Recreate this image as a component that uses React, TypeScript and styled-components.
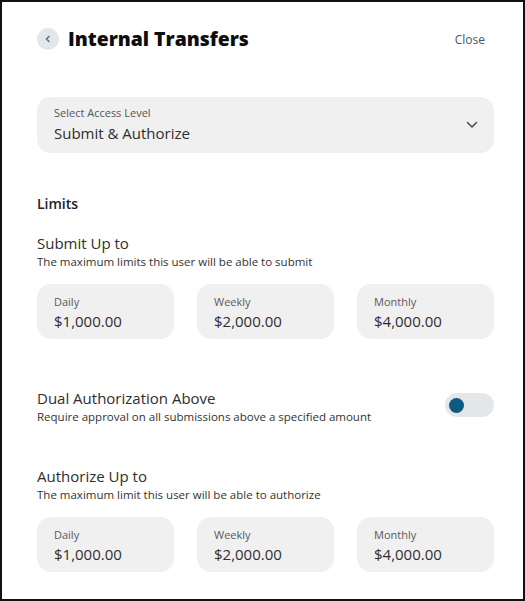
import styled, { createGlobalStyle } from "styled-components"

const GlobalStyle = createGlobalStyle`
  html, body {
    margin: 0;
    padding: 0;
    background: #fff;
  }
  body {
    font-family: "Open Sans", "Noto Sans", sans-serif;
    color: #2b2b2b;
  }
`

interface LimitItem {
  label: string
  value: string
}

const limits: LimitItem[] = [
  { label: "Daily", value: "$1,000.00" },
  { label: "Weekly", value: "$2,000.00" },
  { label: "Monthly", value: "$4,000.00" },
]

function LimitCards({ items }: { items: LimitItem[] }) {
  return (
    <Cards>
      {items.map((item) => (
        <Card key={item.label}>
          <CardLabel>{item.label}</CardLabel>
          <CardValue>{item.value}</CardValue>
        </Card>
      ))}
    </Cards>
  )
}

export default function App() {
  return (
    <>
      <GlobalStyle />
      <Frame>
        <Header>
          <BackButton type="button" aria-label="Back">
            <svg width="8" height="8" viewBox="0 0 8 8">
              <path d="M5 1.5 L2.5 4 L5 6.5" fill="none" stroke="#4a6272" strokeWidth="1.3" strokeLinecap="round" strokeLinejoin="round" />
            </svg>
          </BackButton>
          <Title>Internal Transfers</Title>
          <CloseButton type="button">Close</CloseButton>
        </Header>

        <Select>
          <SelectText>
            <SelectLabel>Select Access Level</SelectLabel>
            <SelectValue>Submit &amp; Authorize</SelectValue>
          </SelectText>
          <svg width="12" height="8" viewBox="0 0 12 8">
            <path d="M1.5 1.5 L6 6 L10.5 1.5" fill="none" stroke="#4b4f55" strokeWidth="1.6" strokeLinecap="round" strokeLinejoin="round" />
          </svg>
        </Select>

        <SectionTitle>Limits</SectionTitle>

        <Heading $top={18}>Submit Up to</Heading>
        <Sub>The maximum limits this user will be able to submit</Sub>
        <LimitCards items={limits} />

        <ToggleRow>
          <div>
            <Heading $top={0}>Dual Authorization Above</Heading>
            <Sub>Require approval on all submissions above a specified amount</Sub>
          </div>
          <Toggle type="button" aria-label="Dual Authorization">
            <Knob />
          </Toggle>
        </ToggleRow>

        <Heading $top={40}>Authorize Up to</Heading>
        <Sub>The maximum limit this user will be able to authorize</Sub>
        <LimitCards items={limits} />
      </Frame>
    </>
  )
}

//style

const Frame = styled.div`
  box-sizing: border-box;
  width: 525px;
  height: 601px;
  border: 2px solid #111;
  padding: 26px 29px 0 35px;
  overflow: hidden;
`

const Header = styled.div`
  display: flex;
  align-items: center;
  height: 22px;
`

const BackButton = styled.button`
  display: flex;
  align-items: center;
  justify-content: center;
  width: 22px;
  height: 22px;
  padding: 0;
  border: none;
  border-radius: 50%;
  background: #e3e7ea;
  cursor: pointer;
`

const Title = styled.h1`
  flex: 1;
  margin: 0 0 0 9px;
  font-size: 19.4px;
  font-weight: 800;
  line-height: 24px;
  color: #0d0d0d;
`

const CloseButton = styled.button`
  margin-right: 9px;
  padding: 0;
  border: none;
  background: none;
  font-family: inherit;
  font-size: 12px;
  color: #3f5969;
  cursor: pointer;
`

const Select = styled.div`
  box-sizing: border-box;
  display: flex;
  align-items: center;
  justify-content: space-between;
  height: 56px;
  margin-top: 47px;
  padding: 0 16px 0 17px;
  border-radius: 14px;
  background: #f0f0f0;
`

const SelectText = styled.div`
  display: flex;
  flex-direction: column;
  gap: 1px;
  padding-bottom: 1px;
`

const SelectLabel = styled.span`
  font-size: 11px;
  line-height: 16px;
  color: #555;
`

const SelectValue = styled.span`
  font-size: 15px;
  line-height: 22px;
  color: #2e2e2e;
`

const SectionTitle = styled.h2`
  margin: 41px 0 0;
  font-size: 14px;
  font-weight: 600;
  line-height: 20px;
  color: #222;
`

const Heading = styled.h3<{ $top: number }>`
  margin: ${(p) => p.$top}px 0 0;
  font-size: 15px;
  font-weight: 400;
  line-height: 22px;
  color: #2e2e2e;
`

const Sub = styled.p`
  margin: 0;
  font-size: 11.5px;
  line-height: 16px;
  color: #333;
`

const Cards = styled.div`
  display: grid;
  grid-template-columns: repeat(3, 1fr);
  column-gap: 23px;
  margin-top: 14px;
`

const Card = styled.div`
  box-sizing: border-box;
  display: flex;
  flex-direction: column;
  height: 55px;
  padding: 10px 17px 0;
  border-radius: 14px;
  background: #f0f0f0;
`

const CardLabel = styled.span`
  font-size: 11px;
  line-height: 16px;
  color: #5a5a5a;
`

const CardValue = styled.span`
  font-size: 15px;
  line-height: 22px;
  color: #2e2e2e;
`

const ToggleRow = styled.div`
  display: flex;
  align-items: center;
  justify-content: space-between;
  margin-top: 48px;
`

const Toggle = styled.button`
  display: flex;
  align-items: center;
  width: 49px;
  height: 24px;
  margin-top: -2px;
  padding: 0 0 0 4px;
  border: none;
  border-radius: 12px;
  background: #e3e7ea;
  cursor: pointer;
`

const Knob = styled.span`
  width: 15px;
  height: 15px;
  border-radius: 50%;
  background: #0f5a80;
`
